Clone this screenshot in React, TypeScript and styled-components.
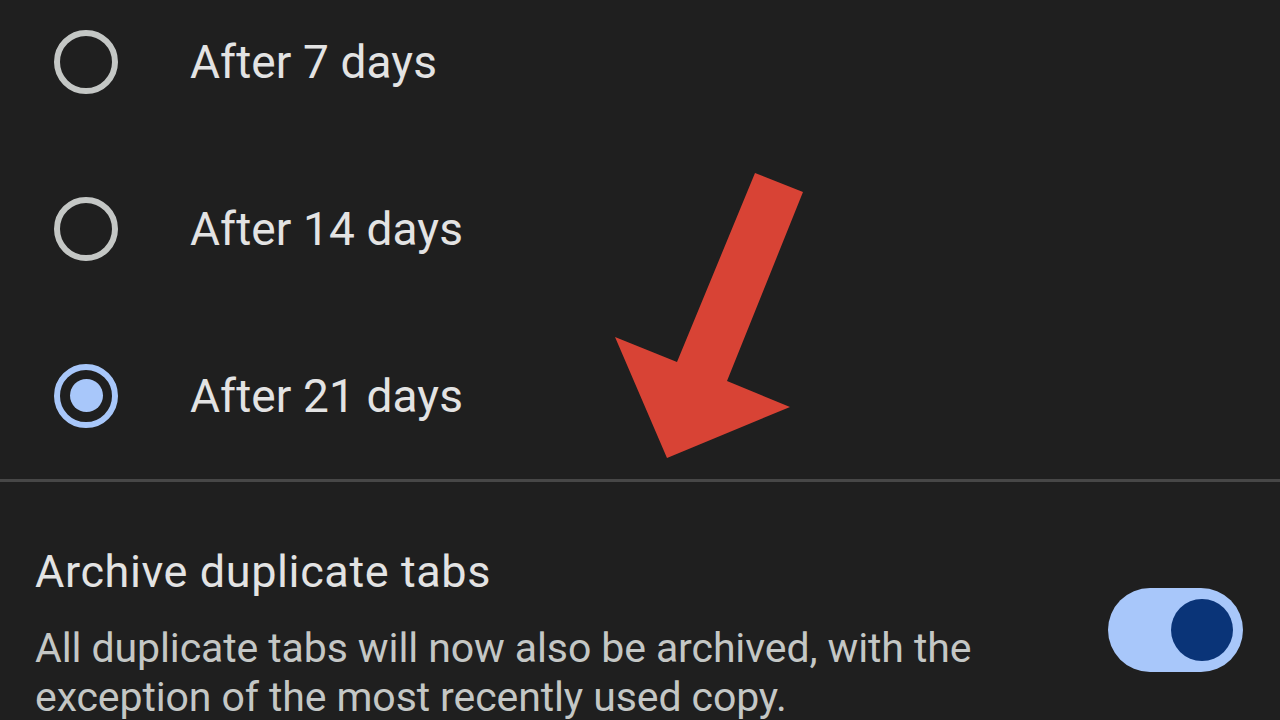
import React from "react";
import styled, { createGlobalStyle } from "styled-components";

const Global = createGlobalStyle`
  html, body {
    margin: 0;
    padding: 0;
    background: #1f1f1f;
    overflow: hidden;
  }
  body {
    font-family: Roboto, "Noto Sans", "Liberation Sans", sans-serif;
    -webkit-font-smoothing: antialiased;
  }
`;

const Page = styled.div`
  position: relative;
  width: 1280px;
  height: 720px;
  overflow: hidden;
  background: #1f1f1f;
`;

const RadioList = styled.div`
  display: flex;
  flex-direction: column;
  margin-top: -22px;
`;

const RadioRow = styled.div`
  display: flex;
  align-items: center;
  height: 167px;
  padding-left: 54px;
  gap: 72px;
`;

const RadioCircle = styled.div<{ $checked?: boolean }>`
  box-sizing: border-box;
  width: 64px;
  height: 64px;
  border-radius: 50%;
  border: 6px solid ${(p) => (p.$checked ? "#a8c7fa" : "#c4c7c5")};
  display: flex;
  align-items: center;
  justify-content: center;
  flex-shrink: 0;
`;

const RadioDot = styled.div`
  width: 33px;
  height: 33px;
  border-radius: 50%;
  background: #a8c7fa;
`;

const RadioLabel = styled.span`
  font-size: 46px;
  line-height: 54px;
  letter-spacing: 0.1px;
  color: #e3e3e3;
`;

const Divider = styled.hr`
  margin: 0;
  border: none;
  height: 3px;
  background: #474747;
`;

const Section = styled.div`
  display: flex;
  align-items: center;
  gap: 48px;
  padding: 64px 37px 0 35px;
`;

const TextCol = styled.div`
  flex: 1;
  display: flex;
  flex-direction: column;
  gap: 26px;
`;

const Title = styled.div`
  font-size: 45px;
  line-height: 52px;
  letter-spacing: 0.6px;
  color: #e3e3e3;
`;

const Desc = styled.div`
  font-size: 41px;
  line-height: 49px;
  letter-spacing: -0.1px;
  color: #c4c7c5;
`;

const Track = styled.div`
  box-sizing: border-box;
  width: 135px;
  height: 84px;
  margin-bottom: 8px;
  border-radius: 42px;
  background: #a8c7fa;
  display: flex;
  align-items: center;
  justify-content: flex-end;
  padding-right: 10px;
  flex-shrink: 0;
`;

const Thumb = styled.div`
  width: 62px;
  height: 62px;
  border-radius: 50%;
  background: #0a3478;
`;

const ArrowSvg = styled.svg`
  position: absolute;
  left: 600px;
  top: 160px;
  width: 220px;
  height: 310px;
`;

const options = [
  { label: "After 7 days", checked: false },
  { label: "After 14 days", checked: false },
  { label: "After 21 days", checked: true },
];

export default function App() {
  return (
    <Page>
      <Global />
      <RadioList>
        {options.map((o) => (
          <RadioRow key={o.label}>
            <RadioCircle $checked={o.checked}>{o.checked && <RadioDot />}</RadioCircle>
            <RadioLabel>{o.label}</RadioLabel>
          </RadioRow>
        ))}
      </RadioList>
      <Divider />
      <Section>
        <TextCol>
          <Title>Archive duplicate tabs</Title>
          <Desc>
            All duplicate tabs will now also be archived, with the exception of the most recently used copy.
          </Desc>
        </TextCol>
        <Track>
          <Thumb />
        </Track>
      </Section>
      <ArrowSvg viewBox="0 0 220 310">
        <polygon
          points="155,13 203,32 127,221 190,247 67,298 15,177 77,202"
          fill="#d84335"
        />
      </ArrowSvg>
    </Page>
  );
}
